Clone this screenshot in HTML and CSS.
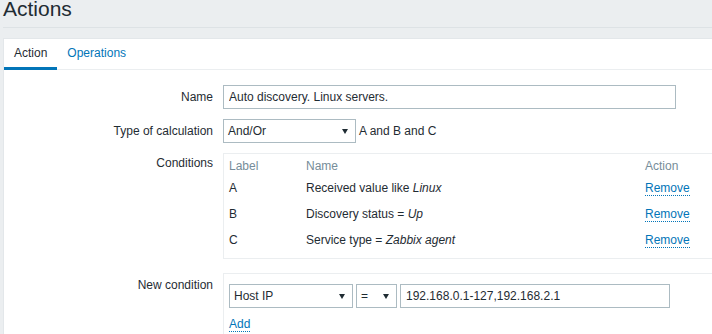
FILE: index.html
```html
<!DOCTYPE html>
<html lang="en">
<head>
  <meta charset="UTF-8">
  <title>Actions</title>
  <link rel="stylesheet" href="styles.css">
</head>
<body>
  <div class="wrapper">
    <header class="page-header">
      <h1>Actions</h1>
    </header>

    <main class="panel">
      <ul class="tabs">
        <li class="tab active">Action</li>
        <li class="tab"><a href="#">Operations</a></li>
      </ul>

      <div class="form">
        <div class="form-label">Name</div>
        <div class="form-field">
          <input class="text-input name-input" type="text" value="Auto discovery. Linux servers.">
        </div>

        <div class="form-label">Type of calculation</div>
        <div class="form-field inline">
          <div class="select calc-select"><span class="select-text">And/Or</span><span class="arrow"></span></div>
          <span class="calc-formula">A and B and C</span>
        </div>

        <div class="form-label label-short">Conditions</div>
        <div class="form-field">
          <div class="cond-box">
            <div class="cond-table">
              <div class="cond-head">Label</div>
              <div class="cond-head">Name</div>
              <div class="cond-head">Action</div>

              <div class="cond-cell">A</div>
              <div class="cond-cell">Received value like <em>Linux</em></div>
              <div class="cond-cell"><a class="link-action" href="#">Remove</a></div>

              <div class="cond-cell">B</div>
              <div class="cond-cell">Discovery status = <em>Up</em></div>
              <div class="cond-cell"><a class="link-action" href="#">Remove</a></div>

              <div class="cond-cell">C</div>
              <div class="cond-cell">Service type = <em>Zabbix agent</em></div>
              <div class="cond-cell"><a class="link-action" href="#">Remove</a></div>
            </div>
          </div>
        </div>

        <div class="form-label new-row">New condition</div>
        <div class="form-field new-row">
          <div class="new-box">
            <div class="new-controls">
              <div class="select host-select"><span class="select-text">Host IP</span><span class="arrow"></span></div>
              <div class="select op-select"><span class="select-text">=</span><span class="arrow"></span></div>
              <input class="text-input ip-input" type="text" value="192.168.0.1-127,192.168.2.1">
            </div>
            <div class="add-line"><a class="link-action" href="#">Add</a></div>
          </div>
        </div>
      </div>
    </main>
  </div>
</body>
</html>
```

FILE: styles.css
```css
body {
  margin: 0;
  background: #ebeef0;
  font-family: "Liberation Sans", Arial, sans-serif;
  font-size: 12px;
  color: #1f2c33;
  overflow: hidden;
}

.wrapper {
  padding-left: 3px;
}

.page-header {
  height: 27px;
  border-bottom: 1px solid #dde2e5;
}

.page-header h1 {
  margin: 0;
  font-size: 21px;
  font-weight: normal;
  line-height: 18px;
}

.panel {
  margin-top: 10px;
  width: 780px;
  height: 320px;
  background: #fff;
  border: 1px solid #e3e7ea;
}

/* tabs */
.tabs {
  display: flex;
  margin: 0;
  padding: 0;
  list-style: none;
  height: 30px;
  border-bottom: 1px solid #ebeef0;
}

.tab {
  padding: 0 10px;
  line-height: 28px;
  border-bottom: 3px solid transparent;
  margin-bottom: -1px;
}

.tab.active {
  border-bottom-color: #0275b8;
}

.tab a {
  color: #0275b8;
  text-decoration: none;
}

/* form */
.form {
  display: grid;
  grid-template-columns: 209px 1fr;
  column-gap: 10px;
  row-gap: 10px;
  padding-top: 15px;
}

.form-label {
  text-align: right;
  line-height: 24px;
  white-space: nowrap;
}

.form-label.label-short {
  line-height: 20px;
}

.new-row {
  margin-top: 4px;
}

.form-field.inline {
  display: flex;
  align-items: center;
}

.text-input {
  box-sizing: border-box;
  height: 24px;
  margin: 0;
  padding: 0 5px;
  border: 1px solid #acbbc2;
  font-family: inherit;
  font-size: 12px;
  color: #1f2c33;
  background: #fff;
  display: block;
}

.name-input {
  width: 453px;
}

.select {
  box-sizing: border-box;
  display: flex;
  align-items: center;
  height: 24px;
  padding: 0 7px 0 4px;
  border: 1px solid #acbbc2;
  background: #fff;
}

.select-text {
  flex: 1;
}

.arrow {
  width: 0;
  height: 0;
  border-left: 3px solid transparent;
  border-right: 3px solid transparent;
  border-top: 5px solid #1f2c33;
}

.calc-select {
  width: 133px;
}

.calc-formula {
  margin-left: 3px;
}

/* conditions */
.cond-box {
  border: 1px solid #ebeef0;
  padding: 0 0 5px 5px;
}

.cond-table {
  display: grid;
  grid-template-columns: 77px 339px 1fr;
}

.cond-head {
  color: #768d99;
  padding-top: 4px;
  line-height: 17px;
}

.cond-cell {
  line-height: 26px;
  white-space: nowrap;
}

.link-action {
  color: #0275b8;
  text-decoration: none;
  border-bottom: 1px dotted #0275b8;
}

/* new condition */
.new-box {
  border: 1px solid #ebeef0;
  padding: 10px 0 10px 5px;
}

.new-controls {
  display: flex;
  gap: 3px;
}

.host-select {
  width: 124px;
}

.op-select {
  width: 41px;
}

.ip-input {
  width: 270px;
}

.add-line {
  margin-top: 4px;
  line-height: 24px;
}
```
